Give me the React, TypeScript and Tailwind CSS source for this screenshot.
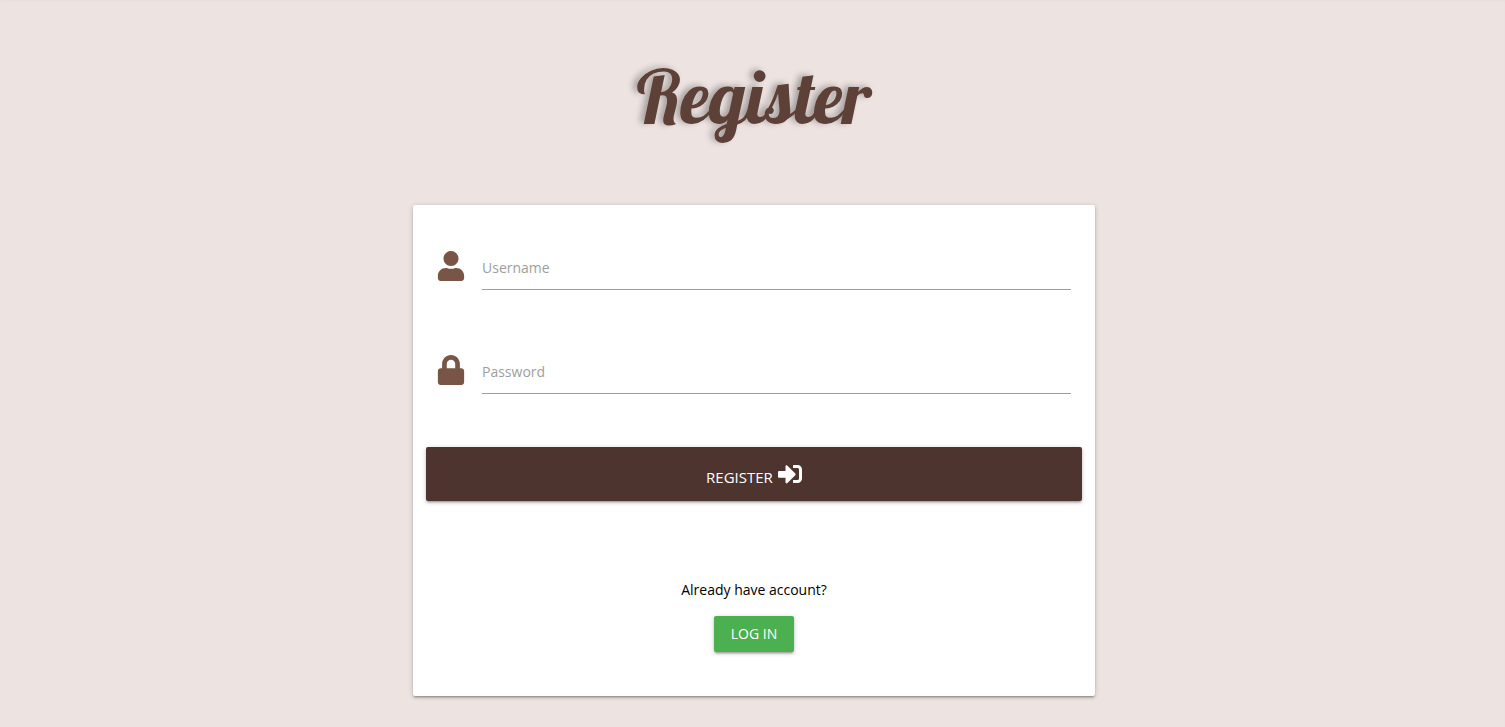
import type { ReactNode } from "react";
import { FaLock, FaSignInAlt, FaUser } from "react-icons/fa";

const raised =
  "shadow-[0_2px_2px_0_rgba(0,0,0,0.14),0_3px_1px_-2px_rgba(0,0,0,0.12),0_1px_5px_0_rgba(0,0,0,0.2)]";

type FieldProps = {
  id: string;
  label: string;
  type: string;
  icon: ReactNode;
};

function Field({ id, label, type, icon }: FieldProps) {
  return (
    <div className="flex h-12 items-start gap-[17px] px-6">
      <span className="flex w-7 shrink-0 pt-[9px] text-3xl leading-none text-[#795548]">{icon}</span>
      <div className="grid min-w-0 flex-1">
        <input
          id={id}
          name={id}
          type={type}
          placeholder=" "
          className="peer col-start-1 row-start-1 h-12 w-full border-b border-[#9e9e9e] bg-transparent text-sm text-black/85 outline-none focus:border-[#795548]"
        />
        <label
          htmlFor={id}
          className="invisible pointer-events-none col-start-1 row-start-1 self-center pt-[3px] text-sm leading-5 text-[#9e9e9e] peer-placeholder-shown:visible"
        >
          {label}
        </label>
      </div>
    </div>
  );
}

export default function App() {
  return (
    <main className="min-h-screen bg-[#ede4e2] pb-8 pl-[3px] font-['Segoe_UI','Open_Sans',sans-serif] text-black/85 shadow-[inset_0_2px_3px_rgba(0,0,0,0.02)]">
      <h1 className="pt-[53px] text-center font-['Lobster','Liberation_Serif',serif] text-[74px] leading-[88px] font-normal text-[#5d4037] [text-shadow:-4px_-1px_6px_rgba(0,0,0,0.3)]">
        Register
      </h1>
      <section className={`mx-auto mt-16 max-w-[682px] rounded-xs bg-white pt-[37px] pb-11 ${raised}`}>
        <form onSubmit={(event) => event.preventDefault()}>
          <div className="flex flex-col gap-14">
            <Field id="username" label="Username" type="text" icon={<FaUser />} />
            <Field id="password" label="Password" type="password" icon={<FaLock />} />
          </div>
          <div className="mt-[53px] px-[13px]">
            <button
              type="submit"
              className={`flex h-[54px] w-full items-center justify-center gap-[5px] rounded-xs bg-[#4e342e] text-[15px] text-white uppercase ${raised}`}
            >
              <span className="pt-1.5">Register</span>
              <FaSignInAlt className="text-2xl" />
            </button>
          </div>
        </form>
        <div className="mt-[77px] flex flex-col items-center gap-4">
          <p className="pt-0.5 text-sm leading-5 text-black">Already have account?</p>
          <a
            href="#login"
            className={`flex h-9 items-center rounded-xs bg-[#4caf50] px-[17px] text-sm text-white uppercase ${raised}`}
          >
            Log in
          </a>
        </div>
      </section>
    </main>
  );
}
